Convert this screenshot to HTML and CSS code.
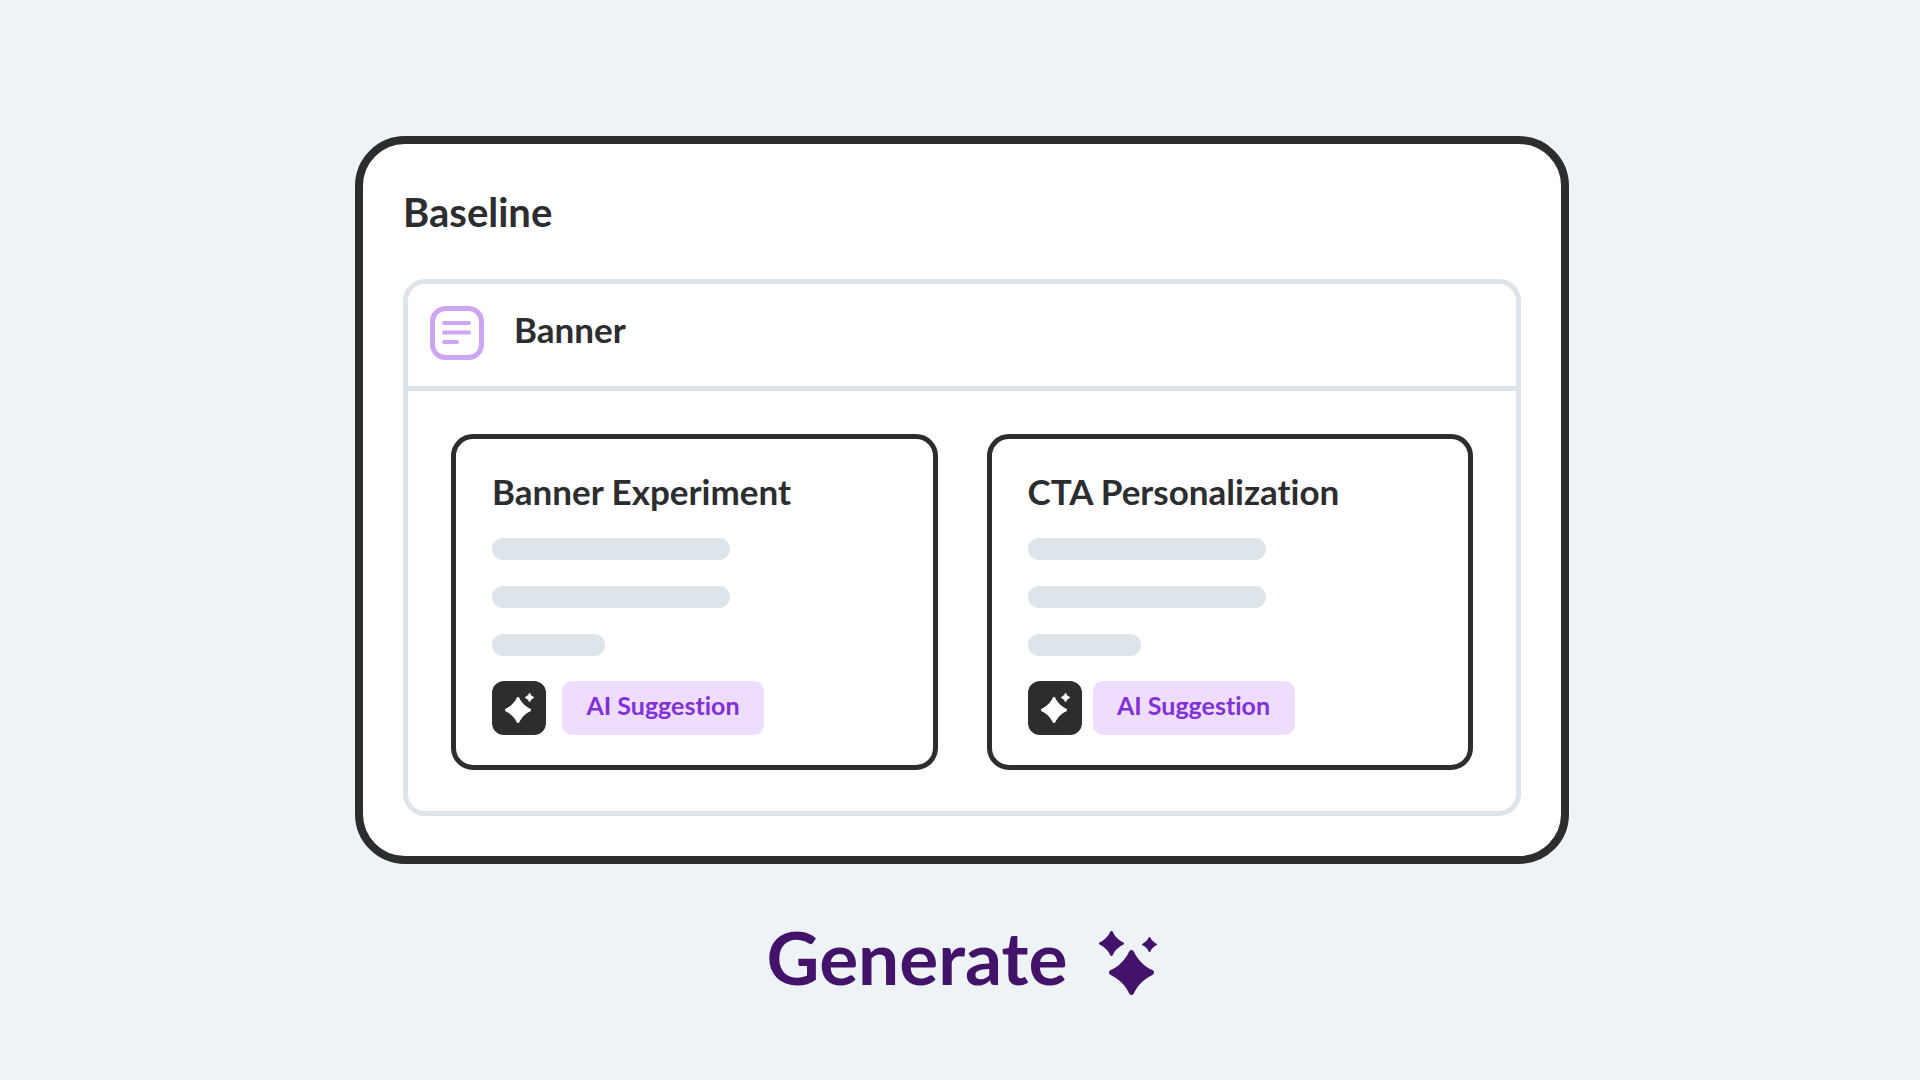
FILE: index.html
```html
<!DOCTYPE html>
<html lang="en">
  <head>
    <meta charset="UTF-8" />
    <meta name="viewport" content="width=device-width, initial-scale=1.0" />
    <title>Baseline</title>
    <link rel="stylesheet" href="styles.css">
  </head>
  <body>
    <!-- shared sparkle shape -->
    <svg class="sprite" aria-hidden="true">
      <symbol id="star" viewBox="-22 -22 44 44">
        <path d="M2.4-20.4C5.5-13 13-5.5 20.4-2.4C22.6-1.4 22.6 1.4 20.4 2.4C13 5.5 5.5 13 2.4 20.4C1.4 22.6-1.4 22.6-2.4 20.4C-5.5 13-13 5.5-20.4 2.4C-22.6 1.4-22.6-1.4-20.4-2.4C-13-5.5-5.5-13-2.4-20.4C-1.4-22.6 1.4-22.6 2.4-20.4Z"/>
      </symbol>
    </svg>

    <main class="page">
      <section class="board">
        <h1 class="board__title">Baseline</h1>
        <div class="panel">
          <div class="panel__header">
            <svg class="panel__icon" viewBox="0 0 54 54" aria-hidden="true">
              <rect x="2.5" y="2.5" width="49" height="49" rx="13"/>
              <path d="M14 17h25M14 26.5h25M14 36h13"/>
            </svg>
            <h2 class="panel__title">Banner</h2>
          </div>
          <div class="panel__body">
            <article class="card">
              <h3 class="card__title">Banner Experiment</h3>
              <div class="lines">
                <div class="line"></div>
                <div class="line"></div>
                <div class="line line--short"></div>
              </div>
              <div class="card__footer">
                <svg class="chip" viewBox="0 0 54 54" aria-hidden="true">
                  <use href="#star" x="13" y="16" width="26" height="26"/>
                  <use href="#star" x="33" y="12" width="9" height="9"/>
                </svg>
                <span class="tag">AI Suggestion</span>
              </div>
            </article>
            <article class="card">
              <h3 class="card__title">CTA Personalization</h3>
              <div class="lines">
                <div class="line"></div>
                <div class="line"></div>
                <div class="line line--short"></div>
              </div>
              <div class="card__footer card__footer--tight">
                <svg class="chip" viewBox="0 0 54 54" aria-hidden="true">
                  <use href="#star" x="13" y="16" width="26" height="26"/>
                  <use href="#star" x="33" y="12" width="9" height="9"/>
                </svg>
                <span class="tag">AI Suggestion</span>
              </div>
            </article>
          </div>
        </div>
      </section>

      <button class="generate" type="button">
        Generate
        <svg class="generate__icon" viewBox="0 0 58 64" aria-hidden="true">
          <use href="#star" x="0" y="0" width="25" height="25"/>
          <use href="#star" x="43" y="6" width="15" height="15"/>
          <use href="#star" x="10" y="19" width="45" height="45"/>
        </svg>
      </button>
    </main>
  </body>
</html>
```

FILE: styles.css
```css
:root {
  --bg: #eef3f6;
  --dark: #2b2d2f;
  --line: #dde4ea;
  --lilac: #cca6f2;
  --tag-bg: #eeddff;
  --tag-text: #8230d8;
  --purple: #421369;
}

* {
  box-sizing: border-box;
}

body {
  margin: 0;
  background: var(--bg);
  color: var(--dark);
  font-family: Lato, "Open Sans", sans-serif;
  font-weight: 700;
  font-variant-ligatures: none;
}

h1,
h2,
h3 {
  margin: 0;
  font-weight: 700;
}

.sprite {
  display: none;
}

.page {
  display: flex;
  flex-direction: column;
  align-items: center;
  padding: 136px 24px 48px 28px;
}

.board {
  width: 100%;
  max-width: 1214px;
  padding: 44px 40px 40px;
  background: #fff;
  border: 8px solid var(--dark);
  border-radius: 50px;
}

.board__title {
  margin-bottom: 43px;
  font-size: 40px;
  line-height: 48px;
}

.panel {
  border: 5px solid var(--line);
  border-radius: 22px;
}

.panel__header {
  display: flex;
  align-items: center;
  gap: 30px;
  padding: 22px 22px 26px;
  border-bottom: 5px solid var(--line);
}

.panel__icon {
  width: 54px;
  height: 54px;
  fill: none;
  stroke: var(--lilac);
  stroke-width: 5;
}

.panel__icon path {
  stroke-width: 4;
  stroke-linecap: round;
}

.panel__title {
  padding-bottom: 8px;
  font-size: 35px;
  line-height: 40px;
}

.panel__body {
  display: grid;
  grid-template-columns: 1fr 1fr;
  gap: 49px;
  padding: 43px 43px 41px;
}

.card {
  padding: 32px 36px 30px;
  border: 5px solid var(--dark);
  border-radius: 22px;
}

.card__title {
  margin-bottom: 27px;
  font-size: 35px;
  line-height: 40px;
}

.lines {
  display: grid;
  gap: 26px;
  margin-bottom: 25px;
}

.line {
  width: 238px;
  height: 22px;
  background: var(--line);
  border-radius: 11px;
}

.line--short {
  width: 113px;
}

.card__footer {
  display: flex;
  gap: 16px;
}

.card__footer--tight {
  gap: 11px;
}

.chip {
  width: 54px;
  height: 54px;
  background: var(--dark);
  border-radius: 12px;
  fill: #fff;
}

.tag {
  width: 202px;
  height: 54px;
  background: var(--tag-bg);
  border-radius: 10px;
  color: var(--tag-text);
  font-size: 25px;
  line-height: 48px;
  text-align: center;
}

.generate {
  display: flex;
  align-items: center;
  gap: 32px;
  margin-top: 53px;
  padding: 0;
  background: none;
  border: 0;
  color: var(--purple);
  font: inherit;
  font-size: 73px;
  line-height: 80px;
  cursor: pointer;
}

.generate__icon {
  width: 58px;
  height: 64px;
  margin-top: 12px;
  fill: currentColor;
}
```
